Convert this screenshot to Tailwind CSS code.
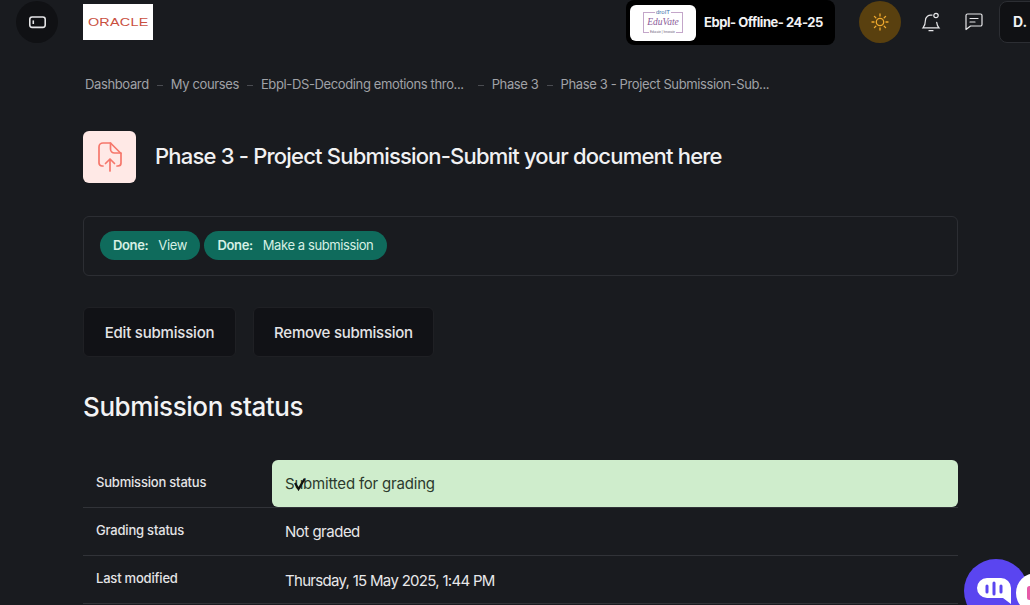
<!DOCTYPE html>
<html lang="en">
<head>
  <meta charset="UTF-8" />
  <title>Phase 3 - Project Submission-Submit your document here</title>
  <script src="https://cdn.jsdelivr.net/npm/@tailwindcss/browser@4"></script>
</head>
<body class="relative w-[1030px] h-[605px] overflow-hidden bg-[#191b1f] text-[#f1f1f2] font-['Inter',sans-serif]">
  <!-- Top bar -->
  <header class="flex items-start h-[44px] pl-4">
    <button class="flex items-center justify-center w-[42px] h-[42px] mt-px rounded-full bg-[#101114] shrink-0">
      <svg width="19" height="19" viewBox="0 0 18 18" fill="none" stroke="#e5e5e7" stroke-width="1.500"><rect x="1.700" y="3.800" width="14.600" height="9.800" rx="2.200"/><path d="M5 7v3.400"/></svg>
    </button>
    <div class="flex items-center justify-center w-[70px] h-9 mt-1 ml-[25px] bg-white shrink-0">
      <span class="pt-px font-['Liberation_Sans',sans-serif] text-[11.5px] tracking-[0.2px] text-[#c9503f] scale-x-125">ORACLE</span>
    </div>
    <div class="w-px h-4 mt-[14px] ml-[31px] bg-[#3a3c41]"></div>
    <div class="flex items-center w-[209px] h-[45px] ml-[442px] pl-1 rounded-lg bg-black shrink-0">
      <div class="flex items-center justify-center w-[66px] h-9 rounded-md bg-white shrink-0">
        <div class="relative flex items-center justify-center w-[40px] h-[21px] border border-[#c3a6c9] font-['Liberation_Serif',serif] italic text-[9.5px] leading-none text-[#8a5a98]">EduVate
          <span class="absolute left-[11px] top-[-4px] px-px bg-white font-['Liberation_Sans',sans-serif] not-italic text-[6px] leading-[7px] text-[#3d6fa8]">droIT</span>
          <span class="absolute left-[5px] bottom-[-3px] px-px bg-white font-['Liberation_Sans',sans-serif] not-italic text-[3px] leading-[5px] text-[#6b5a78]">Educate | Innovate</span>
        </div>
      </div>
      <span class="ml-2 text-[13px] font-bold tracking-[-0.45px] text-[#f2f2f3] whitespace-nowrap">Ebpl- Offline- 24-25</span>
    </div>
    <div class="w-px h-4 mt-[14px] ml-[11px] bg-[#3a3c41]"></div>
    <button class="flex items-center justify-center w-[42px] h-[42px] mt-px ml-[13px] rounded-full bg-[#59400f] shrink-0">
      <svg width="18" height="18" viewBox="0 0 18 18" fill="none" stroke="#f0a92e" stroke-width="1.300" stroke-linecap="round"><circle cx="9" cy="9" r="3.700"/><path d="M9 1v2M9 15v2M1 9h2M15 9h2M3.400 3.400l1.400 1.400M13.200 13.200l1.400 1.400M3.400 14.600l1.400-1.400M13.200 4.800l1.400-1.400"/></svg>
    </button>
    <svg class="mt-[11px] ml-[20px] shrink-0" width="20" height="22" viewBox="0 0 20 22" fill="none" stroke="#e8e8ea" stroke-width="1.200" stroke-linecap="round"><path d="M11 4.200A5.400 5.400 0 0 0 4.400 9.500c0 3.400-.9 5.600-2.400 7.300h16c-1.300-1.500-2.100-3.200-2.300-5.400"/><circle cx="15" cy="4.500" r="2.200"/><path d="M8 19.700h4"/></svg>
    <svg class="mt-[12px] ml-[23px] shrink-0" width="19" height="19" viewBox="0 0 19 19" fill="none" stroke="#e8e8ea" stroke-width="1.200" stroke-linecap="round" stroke-linejoin="round"><path d="M3.500 2h13a1.500 1.500 0 0 1 1.500 1.500v9a1.500 1.500 0 0 1-1.500 1.500H6.500L2 17.500V3.500A1.500 1.500 0 0 1 3.500 2z"/><path d="M6 6.500h8M6 10h5"/></svg>
    <div class="flex items-center h-[42px] w-[50px] mt-px ml-[16px] pl-[13px] rounded-lg border border-[#2c2e33] bg-[#101114] text-sm font-bold shrink-0">D.</div>
  </header>

  <main class="pl-[83px] w-[958px]">
    <!-- Breadcrumb -->
    <nav class="flex items-center h-5 mt-[31px] ml-[2px] text-[13px] tracking-[-0.37px] text-[#a0a2a7] whitespace-nowrap">
      <span>Dashboard</span>
      <span class="w-[6px] h-px mx-2 bg-[#4a4c51]"></span>
      <span>My courses</span>
      <span class="w-[6px] h-px mx-2 bg-[#4a4c51]"></span>
      <span>Ebpl-DS-Decoding emotions thro...</span>
      <span class="w-[6px] h-px ml-[14px] mr-2 bg-[#4a4c51]"></span>
      <span>Phase 3</span>
      <span class="w-[6px] h-px mx-2 bg-[#4a4c51]"></span>
      <span>Phase 3 - Project Submission-Sub...</span>
    </nav>

    <!-- Page title -->
    <div class="flex items-center mt-[36px]">
      <div class="flex items-center justify-center w-[53px] h-[52px] rounded-md bg-[#ffe9e6] shrink-0">
        <svg width="28" height="32" viewBox="0 0 28 32" fill="none" stroke="#f6776b" stroke-width="1.700" stroke-linecap="round" stroke-linejoin="round"><path d="M7 25H6a3 3 0 0 1-3-3V6a4 4 0 0 1 4-4h7.500L25 12.500V22a3 3 0 0 1-3 3h-1"/><path d="M14.500 2v6a4 4 0 0 0 4 4H25"/><path d="M14 30V18M9.500 22.500L14 18l4.500 4.500"/></svg>
      </div>
      <h1 class="ml-[19px] mb-[2px] text-[22px] font-medium tracking-[-0.8px] text-[#f1f1f2]">Phase 3 - Project Submission-Submit your document here</h1>
    </div>

    <!-- Completion info -->
    <div class="flex items-center gap-1 h-[60px] mt-[33px] pl-4 rounded-md border border-[#2c2e33]">
      <span class="flex items-center justify-center w-[100px] h-[29px] mb-px rounded-full bg-[#0f6b5c] text-[13px] text-[#d6f0e4] tracking-[-0.35px] whitespace-nowrap"><b class="font-semibold mr-[10px]">Done:</b>View</span>
      <span class="flex items-center justify-center w-[183px] h-[29px] mb-px rounded-full bg-[#0f6b5c] text-[13px] text-[#d6f0e4] tracking-[-0.4px] whitespace-nowrap"><b class="font-semibold mr-[10px]">Done:</b>Make a submission</span>
    </div>

    <!-- Actions -->
    <div class="flex gap-[17px] mt-[31px]">
      <button class="w-[153px] h-[50px] pt-[2px] rounded-md border border-[#1f2024] bg-[#111216] text-[15px] font-medium tracking-[-0.2px] text-[#e4e4e6]">Edit submission</button>
      <button class="w-[181px] h-[50px] pt-[2px] rounded-md border border-[#1f2024] bg-[#111216] text-[15px] font-medium tracking-[-0.25px] text-[#e4e4e6]">Remove submission</button>
    </div>

    <h2 class="mt-[32px] text-[26px] leading-9 font-medium tracking-[-0.42px] text-[#f3f3f4]">Submission status</h2>

    <!-- Status table -->
    <div class="mt-[35px]">
      <div class="flex h-[48px] border-b border-[#313338]">
        <div class="flex items-center w-[189px] pl-[13px] pb-[2px] text-[13px] font-medium tracking-[-0.2px] text-[#e4e4e6]">Submission status</div>
        <div class="relative flex-1 flex items-center h-[47px] pl-[13px] pt-[2px] rounded-md bg-[#cfedcc] text-[15px] tracking-[-0.2px] text-[#2c3a2c]">Submitted for grading
          <svg class="absolute left-[21px] top-[18px]" width="14" height="13" viewBox="0 0 14 13" fill="none" stroke="#111" stroke-width="2.200"><path d="M2 5l3.500 6L11.500 1"/></svg>
        </div>
      </div>
      <div class="flex items-center h-[48px] border-b border-[#313338]">
        <div class="w-[189px] pl-[13px] pb-[2px] text-[13px] font-medium tracking-[-0.2px] text-[#e4e4e6]">Grading status</div>
        <div class="pl-[13px] pt-[2px] text-[15px] tracking-[-0.5px] text-[#e8e8ea]">Not graded</div>
      </div>
      <div class="flex items-center h-[48px] border-b border-[#313338]">
        <div class="w-[189px] pl-[13px] pb-[2px] text-[13px] font-medium tracking-[-0.2px] text-[#e4e4e6]">Last modified</div>
        <div class="pl-[13px] pt-[4px] text-[15px] tracking-[-0.7px] text-[#e8e8ea]">Thursday, 15 May 2025, 1:44 PM</div>
      </div>
    </div>
  </main>

  <!-- Chat widget -->
  <div class="absolute left-[964px] top-[559px] flex items-center justify-center w-[64px] h-[64px] rounded-full bg-[#5a45f0]">
    <svg class="mr-[4px]" width="36" height="30" viewBox="0 0 36 30"><path d="M11 2h14a10 10 0 0 1 10 10v16l-8-6H11a10 10 0 0 1 0-20z" fill="#fff"/><path d="M11 10v6M18 7v11M25 10v6" stroke="#5a45f0" stroke-width="3" stroke-linecap="round"/></svg>
  </div>
  <div class="absolute left-[1016px] top-[573px] flex items-center pl-[11px] w-[40px] h-[40px] rounded-full bg-white">
    <span class="w-[5px] h-[14px] rounded-full bg-[#e85aa8]"></span>
  </div>
</body>
</html>
